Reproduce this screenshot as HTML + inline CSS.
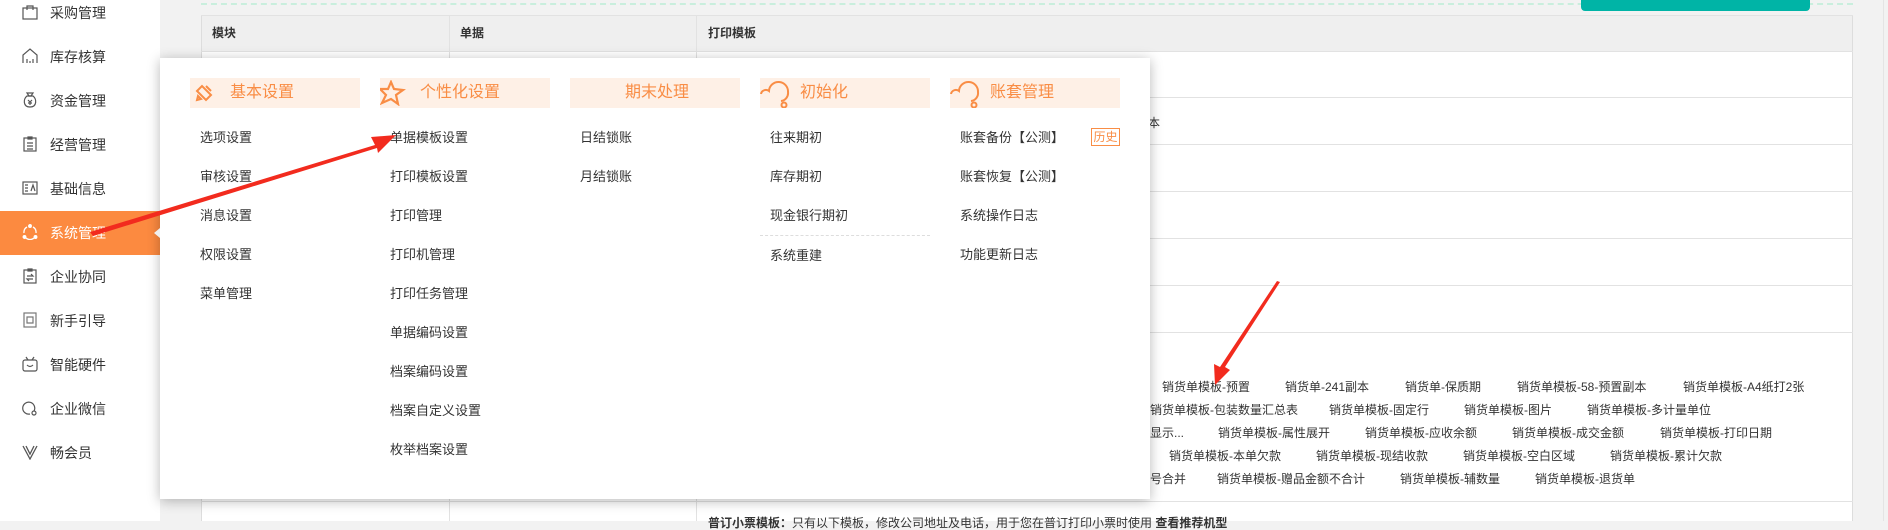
<!DOCTYPE html>
<html><head><meta charset="utf-8"><style>
*{margin:0;padding:0;box-sizing:border-box}
body{width:1888px;height:521px;overflow:hidden;background:#f2f2f2;font-family:"Liberation Sans","Noto Sans CJK SC",sans-serif;color:#333;position:relative}
.a{position:absolute;white-space:nowrap}
#side{position:absolute;left:0;top:0;width:160px;height:521px;background:#fff}
.si{position:absolute;left:0;width:160px;height:44px;font-size:14px;line-height:44px;color:#333}
.si span{position:absolute;left:50px}
.si svg{position:absolute;left:22px;top:13px}
.si.on{background:#fc8a40;color:#fff}
.tb{position:absolute;left:201px;top:15px;width:1652px;height:506px;background:#fff;border-left:1px solid #ddd;border-right:1px solid #ddd}
.hl{position:absolute;left:201px;width:1652px;height:1px;background:#e2e2e2}
.vl{position:absolute;top:15px;width:1px;height:506px;background:#e2e2e2}
.t12{font-size:12px;color:#333;line-height:14px}
#pop{position:absolute;left:160px;top:58px;width:990px;height:441px;background:#fff;box-shadow:0 2px 12px rgba(0,0,0,.28)}
.ch{position:absolute;top:20px;width:170px;height:30px;background:#fef0e6;color:#f98d45;font-size:16px;line-height:30px}
.it{position:absolute;font-size:13px;color:#333;line-height:16px}
</style></head><body>
<div id="side">
 <div class="si" style="top:-9px"><svg width="16" height="16" viewBox="0 0 16 16" fill="none" stroke="#555" stroke-width="1.2"><rect x="1" y="4" width="14" height="11"/><path d="M5 6V2h6v4"/></svg><span>采购管理</span></div>
 <div class="si" style="top:35px"><svg width="16" height="16" viewBox="0 0 16 16" fill="none" stroke="#555" stroke-width="1.2"><path d="M1 15V7l7-6 7 6v8"/><path d="M5 15v-4M8 15v-2M11 15v-4"/></svg><span>库存核算</span></div>
 <div class="si" style="top:79px"><svg width="16" height="16" viewBox="0 0 16 16" fill="none" stroke="#555" stroke-width="1.2"><path d="M5 1h6l-2 3h-2z"/><path d="M5 4C1 7 1 15 8 15s7-8 3-11z"/><path d="M6 8l2 2 2-2M8 10v3M6 11h4"/></svg><span>资金管理</span></div>
 <div class="si" style="top:123px"><svg width="16" height="16" viewBox="0 0 16 16" fill="none" stroke="#555" stroke-width="1.2"><rect x="2" y="2" width="12" height="13"/><path d="M6 1h4v2H6zM5 7h6M5 10h6M5 13h6"/></svg><span>经营管理</span></div>
 <div class="si" style="top:167px"><svg width="16" height="16" viewBox="0 0 16 16" fill="none" stroke="#555" stroke-width="1.2"><rect x="1" y="2" width="14" height="12"/><path d="M3 5h3M3 8h3M3 11h3M9 11l2-6 2 6"/></svg><span>基础信息</span></div>
 <div class="si on" style="top:211px"><svg width="16" height="16" viewBox="0 0 16 16" fill="none" stroke="#fff" stroke-width="1.3"><path d="M5 3A6 6 0 0 0 2 9M14 9a6 6 0 0 0-3-6M4 14a6 6 0 0 0 8 0"/><circle cx="8" cy="2" r="1.3" fill="#fff"/><circle cx="2.5" cy="13" r="1.3" fill="#fff"/><circle cx="13.5" cy="13" r="1.3" fill="#fff"/></svg><span>系统管理</span></div>
 <div class="si" style="top:255px"><svg width="16" height="16" viewBox="0 0 16 16" fill="none" stroke="#555" stroke-width="1.2"><rect x="2" y="2" width="12" height="13"/><path d="M6 1h4v2H6zM5 8h6l-2-2M11 11H5l2 2"/></svg><span>企业协同</span></div>
 <div class="si" style="top:299px"><svg width="16" height="16" viewBox="0 0 16 16" fill="none" stroke="#777" stroke-width="1.2"><rect x="2" y="1" width="12" height="14"/><path d="M5 5h6v6H5z"/></svg><span>新手引导</span></div>
 <div class="si" style="top:343px"><svg width="16" height="16" viewBox="0 0 16 16" fill="none" stroke="#555" stroke-width="1.2"><rect x="1" y="4" width="14" height="11" rx="2"/><path d="M4 1l2 3M12 1l-2 3M5 9q3 3 6 0"/></svg><span>智能硬件</span></div>
 <div class="si" style="top:387px"><svg width="16" height="16" viewBox="0 0 16 16" fill="none" stroke="#555" stroke-width="1.2"><path d="M12 11A6 6 0 1 0 8 14"/><circle cx="12" cy="13" r="2"/></svg><span>企业微信</span></div>
 <div class="si" style="top:431px"><svg width="16" height="16" viewBox="0 0 16 16" fill="none" stroke="#555" stroke-width="1.3"><path d="M1 2l7 13 7-13M4 2l4 8 4-8"/></svg><span>畅会员</span></div>
</div>
<div class="a" style="left:201px;top:3px;width:1652px;border-top:2px dashed #c9eedd"></div>
<div class="a" style="left:1581px;top:0;width:229px;height:11px;background:#00b4a6;border-radius:0 0 4px 4px"></div>
<div class="a" style="left:1883px;top:0;width:1px;height:521px;background:#e4e4e4"></div>
<div class="tb"></div>
<div class="a" style="left:202px;top:16px;width:1650px;height:35px;background:#efefef"></div>
<div class="hl" style="top:15px"></div>
<div class="hl" style="top:51px"></div>
<div class="hl" style="top:97px"></div>
<div class="hl" style="top:144px"></div>
<div class="hl" style="top:191px"></div>
<div class="hl" style="top:238px"></div>
<div class="hl" style="top:285px"></div>
<div class="hl" style="top:332px"></div>
<div class="hl" style="top:501px"></div>
<div class="vl" style="left:449px"></div>
<div class="vl" style="left:696px"></div>
<div class="a t12" style="left:212px;top:26px;font-weight:bold">模块</div>
<div class="a t12" style="left:460px;top:26px;font-weight:bold">单据</div>
<div class="a t12" style="left:708px;top:26px;font-weight:bold">打印模板</div>
<div class="a t12" style="left:1148px;top:116px">本</div>
<div class="a t12" style="left:1162px;top:380px">销货单模板-预置</div>
<div class="a t12" style="left:1285px;top:380px">销货单-241副本</div>
<div class="a t12" style="left:1405px;top:380px">销货单-保质期</div>
<div class="a t12" style="left:1517px;top:380px">销货单模板-58-预置副本</div>
<div class="a t12" style="left:1683px;top:380px">销货单模板-A4纸打2张</div>
<div class="a t12" style="left:1150px;top:403px">销货单模板-包装数量汇总表</div>
<div class="a t12" style="left:1329px;top:403px">销货单模板-固定行</div>
<div class="a t12" style="left:1464px;top:403px">销货单模板-图片</div>
<div class="a t12" style="left:1587px;top:403px">销货单模板-多计量单位</div>
<div class="a t12" style="left:1150px;top:426px">显示...</div>
<div class="a t12" style="left:1218px;top:426px">销货单模板-属性展开</div>
<div class="a t12" style="left:1365px;top:426px">销货单模板-应收余额</div>
<div class="a t12" style="left:1512px;top:426px">销货单模板-成交金额</div>
<div class="a t12" style="left:1660px;top:426px">销货单模板-打印日期</div>
<div class="a t12" style="left:1169px;top:449px">销货单模板-本单欠款</div>
<div class="a t12" style="left:1316px;top:449px">销货单模板-现结收款</div>
<div class="a t12" style="left:1463px;top:449px">销货单模板-空白区域</div>
<div class="a t12" style="left:1610px;top:449px">销货单模板-累计欠款</div>
<div class="a t12" style="left:1150px;top:472px">号合并</div>
<div class="a t12" style="left:1217px;top:472px">销货单模板-赠品金额不合计</div>
<div class="a t12" style="left:1400px;top:472px">销货单模板-辅数量</div>
<div class="a t12" style="left:1535px;top:472px">销货单模板-退货单</div>
<div class="a t12" style="left:708px;top:516px"><b>普订小票模板：</b>只有以下模板，修改公司地址及电话，用于您在普订打印小票时使用 <b>查看推荐机型</b></div>

<div id="pop">
 <div class="ch" style="left:30px"><svg style="position:absolute;left:4px;top:5px" width="20" height="20" viewBox="0 0 20 20" fill="none" stroke="#f98d45" stroke-width="2"><path d="M3 8l5-5 9 9-5 5zM3 17l4-1-3-3z"/><path d="M12 3l5 5"/></svg><span style="position:absolute;left:40px">基本设置</span></div>
 <div class="ch" style="left:220px"><svg style="position:absolute;left:0;top:2px" width="26" height="26" viewBox="0 0 26 26" fill="none" stroke="#f98d45" stroke-width="2.2"><path d="M11 2l3 7 9 1-7 5 2 9-7-5-9 4 4-8-6-6h8z"/></svg><span style="position:absolute;left:40px">个性化设置</span></div>
 <div class="ch" style="left:410px;text-align:center;padding-left:4px">期末处理</div>
 <div class="ch" style="left:600px"><svg style="position:absolute;left:0;top:2px" width="30" height="28" viewBox="0 0 30 28" fill="none" stroke="#f98d45" stroke-width="2"><path d="M1 14a5 5 0 0 1 8-3A9 9 0 0 1 28 12a8 8 0 0 1-7 9"/><circle cx="24" cy="25" r="2.5"/></svg><span style="position:absolute;left:40px">初始化</span></div>
 <div class="ch" style="left:790px"><svg style="position:absolute;left:0;top:2px" width="30" height="28" viewBox="0 0 30 28" fill="none" stroke="#f98d45" stroke-width="2"><path d="M1 14a5 5 0 0 1 8-3A9 9 0 0 1 28 12a8 8 0 0 1-7 9"/><circle cx="24" cy="25" r="2.5"/></svg><span style="position:absolute;left:40px">账套管理</span></div>

 <div class="it" style="left:40px;top:72px">选项设置</div>
 <div class="it" style="left:40px;top:111px">审核设置</div>
 <div class="it" style="left:40px;top:150px">消息设置</div>
 <div class="it" style="left:40px;top:189px">权限设置</div>
 <div class="it" style="left:40px;top:228px">菜单管理</div>

 <div class="it" style="left:230px;top:72px">单据模板设置</div>
 <div class="it" style="left:230px;top:111px">打印模板设置</div>
 <div class="it" style="left:230px;top:150px">打印管理</div>
 <div class="it" style="left:230px;top:189px">打印机管理</div>
 <div class="it" style="left:230px;top:228px">打印任务管理</div>
 <div class="it" style="left:230px;top:267px">单据编码设置</div>
 <div class="it" style="left:230px;top:306px">档案编码设置</div>
 <div class="it" style="left:230px;top:345px">档案自定义设置</div>
 <div class="it" style="left:230px;top:384px">枚举档案设置</div>

 <div class="it" style="left:420px;top:72px">日结锁账</div>
 <div class="it" style="left:420px;top:111px">月结锁账</div>

 <div class="it" style="left:610px;top:72px">往来期初</div>
 <div class="it" style="left:610px;top:111px">库存期初</div>
 <div class="it" style="left:610px;top:150px">现金银行期初</div>
 <div class="a" style="left:600px;top:177px;width:170px;border-top:1px dashed #ddd"></div>
 <div class="it" style="left:610px;top:190px">系统重建</div>

 <div class="it" style="left:800px;top:72px">账套备份【公测】</div>
 <div class="it" style="left:800px;top:111px">账套恢复【公测】</div>
 <div class="it" style="left:800px;top:150px">系统操作日志</div>
 <div class="it" style="left:800px;top:189px">功能更新日志</div>
 <div class="a" style="left:931px;top:70px;width:29px;height:18px;border:1px solid #f98d45;color:#f98d45;font-size:12px;line-height:16px;text-align:center">历史</div>
</div>
<div class="a" style="left:154px;top:228px;width:0;height:0;border-top:5px solid transparent;border-bottom:5px solid transparent;border-right:6px solid #f0f0f0"></div>
<svg class="a" style="left:0;top:0" width="1888" height="521">
 <polygon points="90,232 375,145 371,137 396,135 378,153 377,148 93,236" fill="#f22b1e"/>
 <polygon points="1280,282 1225,367 1230,370 1215,385 1214,364 1220,367 1277,281" fill="#f22b1e"/>
</svg>
</body></html>
